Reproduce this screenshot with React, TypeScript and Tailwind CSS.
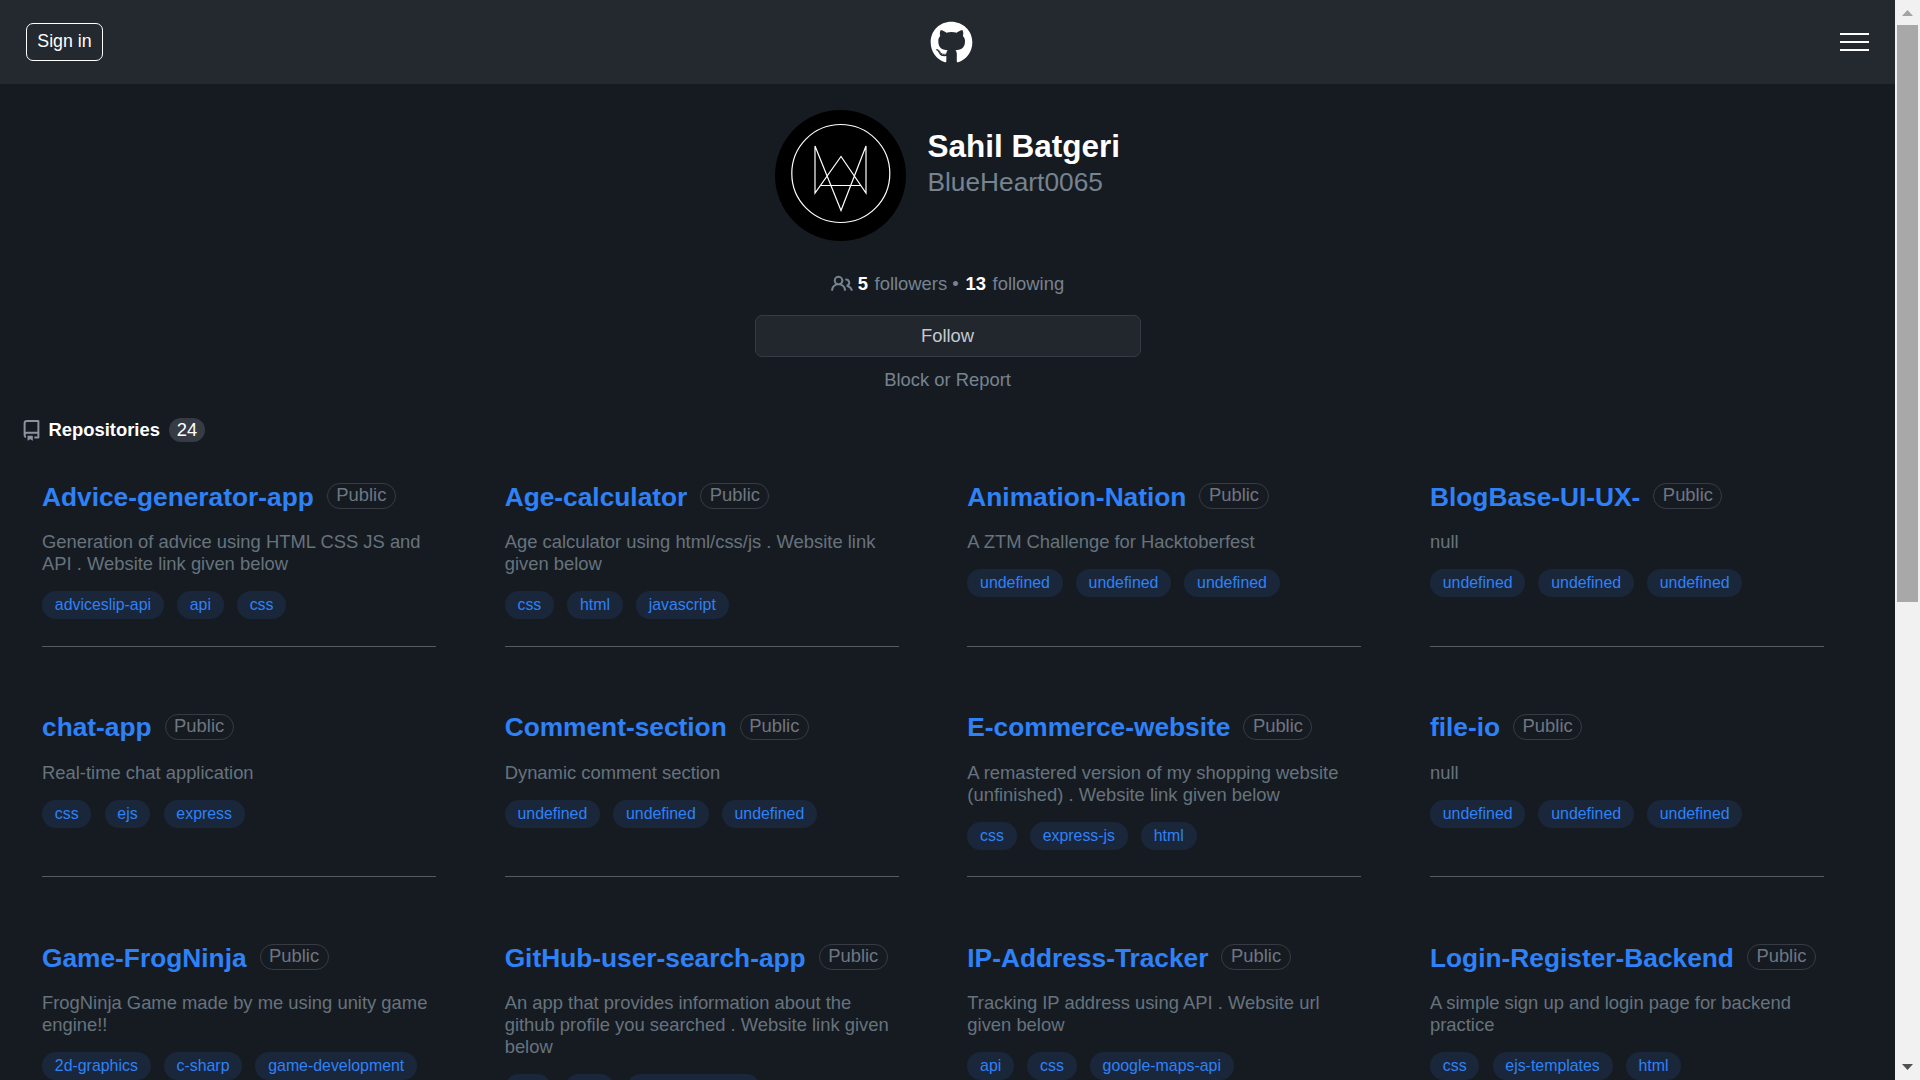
import { FaGithub } from "react-icons/fa";

type Repo = { name: string; description: string; topics: string[] };

const none = ["undefined", "undefined", "undefined"];

const repos: Repo[] = [
  { name: "Advice-generator-app", description: "Generation of advice using HTML CSS JS and API . Website link given below", topics: ["adviceslip-api", "api", "css"] },
  { name: "Age-calculator", description: "Age calculator using html/css/js . Website link given below", topics: ["css", "html", "javascript"] },
  { name: "Animation-Nation", description: "A ZTM Challenge for Hacktoberfest", topics: none },
  { name: "BlogBase-UI-UX-", description: "null", topics: none },
  { name: "chat-app", description: "Real-time chat application", topics: ["css", "ejs", "express"] },
  { name: "Comment-section", description: "Dynamic comment section", topics: none },
  { name: "E-commerce-website", description: "A remastered version of my shopping website (unfinished) . Website link given below", topics: ["css", "express-js", "html"] },
  { name: "file-io", description: "null", topics: none },
  { name: "Game-FrogNinja", description: "FrogNinja Game made by me using unity game engine!!", topics: ["2d-graphics", "c-sharp", "game-development"] },
  { name: "GitHub-user-search-app", description: "An app that provides information about the github profile you searched . Website link given below", topics: ["api", "css", "frontendmentor"] },
  { name: "IP-Address-Tracker", description: "Tracking IP address using API . Website url given below", topics: ["api", "css", "google-maps-api"] },
  { name: "Login-Register-Backend", description: "A simple sign up and login page for backend practice", topics: ["css", "ejs-templates", "html"] },
];

function Header() {
  return (
    <header className="flex h-[84px] items-center justify-between bg-[#24292f] pr-[26px] pl-[26px]">
      <button className="h-[38px] w-[77px] rounded-[7px] border border-white pb-[2px] text-[17.8px] leading-5 text-white">Sign in</button>
      <FaGithub className="-ml-[40px] size-[43px] text-white" />
      <div className="flex w-[29px] flex-col gap-1.5">
        <span className="h-0.5 bg-white" />
        <span className="h-0.5 bg-white" />
        <span className="h-0.5 bg-white" />
      </div>
    </header>
  );
}

function PeopleIcon() {
  return (
    <svg className="mr-[5px] size-[22px]" viewBox="0 0 16 16" fill="currentColor">
      <path d="M2 5.500a3.500 3.500 0 1 1 5.898 2.549 5.508 5.508 0 0 1 3.034 4.084.75.75 0 1 1-1.482.235 4 4 0 0 0-7.900 0 .75.75 0 0 1-1.482-.236A5.507 5.507 0 0 1 3.102 8.050 3.493 3.493 0 0 1 2 5.500ZM11 4a3.001 3.001 0 0 1 2.220 5.018 5.010 5.010 0 0 1 2.560 3.012.749.749 0 0 1-.885.954.752.752 0 0 1-.549-.514 3.507 3.507 0 0 0-2.522-2.372.75.75 0 0 1-.574-.730v-.352a.75.75 0 0 1 .416-.672A1.500 1.500 0 0 0 11 5.500.75.75 0 0 1 11 4Zm-5.500-.500a2 2 0 1 0-.001 3.999A2 2 0 0 0 5.500 3.500Z" />
    </svg>
  );
}

function RepoIcon() {
  return (
    <svg className="size-[21px] text-[#8b949e]" viewBox="0 0 16 16" fill="currentColor">
      <path d="M2 2.500A2.500 2.500 0 0 1 4.500 0h8.750a.75.75 0 0 1 .75.75v12.500a.75.75 0 0 1-.75.75h-2.500a.75.75 0 0 1 0-1.500h1.750v-2h-8a1 1 0 0 0-.714 1.700.75.75 0 1 1-1.072 1.050A2.495 2.495 0 0 1 2 11.500Zm10.500-1h-8a1 1 0 0 0-1 1v6.708A2.486 2.486 0 0 1 4.500 9h8ZM5 12.250a.25.25 0 0 1 .25-.25h3.500a.25.25 0 0 1 .25.25v3.250a.25.25 0 0 1-.4.200l-1.450-1.087a.249.249 0 0 0-.3 0L5.400 15.700a.25.25 0 0 1-.4-.200Z" />
    </svg>
  );
}

function Avatar() {
  return (
    <svg className="size-[131px]" viewBox="0 0 131 131" fill="none" stroke="#fff">
      <circle cx="65.5" cy="65.5" r="65.5" fill="#000" stroke="none" />
      <circle cx="65.8" cy="63.5" r="49" strokeWidth="1.2" />
      <path d="M66 100.500L40 36V83L66 46.500L91 83V36L66 100.500ZM46 75.500H85.500" strokeWidth="1.2" />
    </svg>
  );
}

function Profile() {
  return (
    <section className="flex flex-col items-center pt-[26px]">
      <div className="flex gap-[21.5px]">
        <Avatar />
        <div className="flex flex-col pt-[18px]">
          <h1 className="text-[31.5px] leading-9 font-bold text-white">Sahil Batgeri</h1>
          <h2 className="mt-[3px] text-[26.3px] leading-[31px] text-[#768390]">BlueHeart0065</h2>
        </div>
      </div>
      <div className="mt-[32px] flex h-[22px] items-center leading-[22px] text-[#768390]">
        <PeopleIcon />
        <b className="mr-[6.5px] text-white">5</b>
        <span>followers</span>
        <span className="mr-[7px] ml-[5px]">•</span>
        <b className="mr-[6.5px] text-white">13</b>
        <span>following</span>
      </div>
      <button className="mt-5 h-[42px] w-[386px] rounded-[7px] border border-[#373b43] bg-[#22262d] pb-px leading-5 text-[#c3c9d1]">Follow</button>
      <p className="mt-3 leading-[22px] text-[#768390]">Block or Report</p>
    </section>
  );
}

function RepoCard({ repo }: { repo: Repo }) {
  return (
    <article className="flex min-h-[165px] flex-col border-b border-[#555b60]">
      <div className="flex h-[30px] items-start gap-[13px]">
        <h3 className="text-[26.3px] leading-[30px] font-bold whitespace-nowrap text-[#2f81f7]">{repo.name}</h3>
        <span className="mt-[1.2px] h-[26px] rounded-full border border-[#373b43] px-[8.5px] leading-[22.4px] text-[#6e7681]">Public</span>
      </div>
      <p className="mt-[19.3px] leading-[22px] text-[#66737d]">{repo.description}</p>
      <ul className="mt-4 flex gap-[13.1px] pb-[26px]">
        {repo.topics.map((topic, i) => (
          <li key={i} className="h-[28px] rounded-full bg-[#1a273a] px-[12.8px] text-[15.9px] leading-[27px] whitespace-nowrap text-[#2f81f7]">{topic}</li>
        ))}
      </ul>
    </article>
  );
}

function Scrollbar() {
  return (
    <div className="flex w-[25px] flex-col items-center bg-[#f1f1f1]">
      <svg className="h-[25px] w-[25px] shrink-0" viewBox="0 0 25 25"><path d="M7 16L12.500 10L18 16Z" fill="#a3a3a3" /></svg>
      <div className="h-[577px] w-[21px] bg-[#a8a8a8]" />
      <svg className="mt-auto h-[25px] w-[25px] shrink-0" viewBox="0 0 25 25"><path d="M7 9L12.500 15L18 9Z" fill="#505050" /></svg>
    </div>
  );
}

export default function App() {
  return (
    <div className="flex h-screen overflow-hidden bg-[#161b22] font-['Liberation_Sans',Arial,sans-serif] text-[18.4px]">
      <main className="min-w-0 flex-1 overflow-hidden">
        <Header />
        <Profile />
        <div className="mt-[27px] ml-[21px] flex h-[24px] items-center">
          <RepoIcon />
          <h2 className="ml-[6.5px] leading-[22px] font-bold text-white">Repositories</h2>
          <span className="ml-[9px] h-[24px] w-[36px] rounded-full bg-[#373b43] text-center leading-[24px] text-white">24</span>
        </div>
        <div className="mt-[40px] ml-[42px] grid grid-cols-[repeat(4,394px)] gap-x-[68.67px] gap-y-[65.4px]">
          {repos.map((repo) => (
            <RepoCard key={repo.name} repo={repo} />
          ))}
        </div>
      </main>
      <Scrollbar />
    </div>
  );
}
